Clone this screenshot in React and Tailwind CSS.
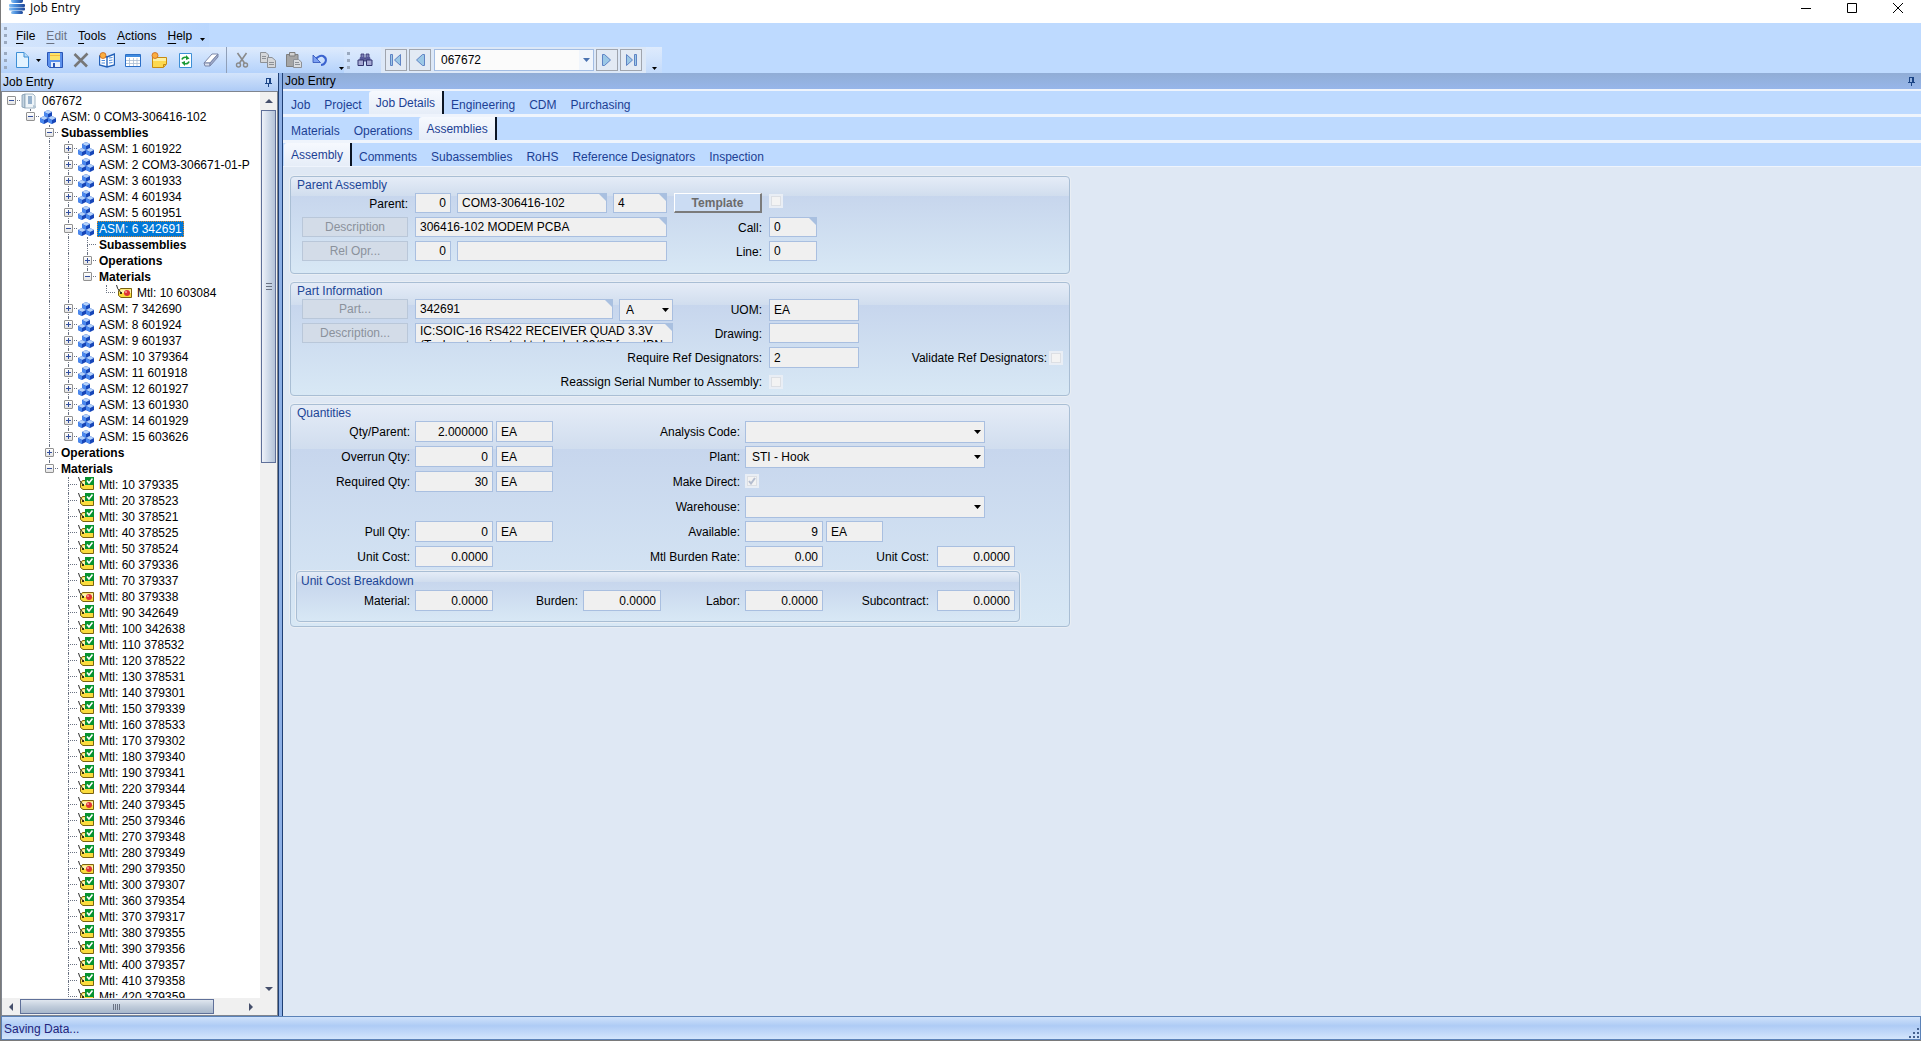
import { useState } from "react";

const subassemblies = [
  ["1", "601922"],
  ["2", "COM3-306671-01-P"],
  ["3", "601933"],
  ["4", "601934"],
  ["5", "601951"],
  ["6", "342691"],
  ["7", "342690"],
  ["8", "601924"],
  ["9", "601937"],
  ["10", "379364"],
  ["11", "601918"],
  ["12", "601927"],
  ["13", "601930"],
  ["14", "601929"],
  ["15", "603626"],
];

const materials = [
  ["10", "379335"],
  ["20", "378523"],
  ["30", "378521"],
  ["40", "378525"],
  ["50", "378524"],
  ["60", "379336"],
  ["70", "379337"],
  ["80", "379338", "tagRed"],
  ["90", "342649"],
  ["100", "342638"],
  ["110", "378532"],
  ["120", "378522"],
  ["130", "378531"],
  ["140", "379301"],
  ["150", "379339"],
  ["160", "378533"],
  ["170", "379302"],
  ["180", "379340"],
  ["190", "379341"],
  ["220", "379344"],
  ["240", "379345", "tagRed"],
  ["250", "379346"],
  ["270", "379348"],
  ["280", "379349"],
  ["290", "379350", "tagRed"],
  ["300", "379307"],
  ["360", "379354"],
  ["370", "379317"],
  ["380", "379355"],
  ["390", "379356"],
  ["400", "379357"],
  ["410", "379358"],
  ["420", "379359"],
];

const tree = {
  label: "067672",
  icon: "job",
  open: true,
  children: [
    {
      label: "ASM: 0 COM3-306416-102",
      icon: "cubes",
      open: true,
      children: [
        {
          label: "Subassemblies",
          bold: true,
          open: true,
          children: subassemblies.map(([seq, part]) => ({
            label: `ASM: ${seq} ${part}`,
            icon: "cubes",
            open: seq === "6",
            children:
              seq === "6"
                ? [
                    { label: "Subassemblies", bold: true },
                    { label: "Operations", bold: true, children: [] },
                    {
                      label: "Materials",
                      bold: true,
                      open: true,
                      children: [{ label: "Mtl: 10 603084", icon: "tagRed" }],
                    },
                  ]
                : [],
          })),
        },
        { label: "Operations", bold: true, children: [] },
        {
          label: "Materials",
          bold: true,
          open: true,
          children: materials.map(([seq, part, icon]) => ({
            label: `Mtl: ${seq} ${part}`,
            icon: icon || "tagGreen",
          })),
        },
      ],
    },
  ],
};

// Flatten the nested nodes to rows; guides say which ancestor lines run on past the row
function flatten(node, guides = [], isLast = true, rows = []) {
  rows.push({ ...node, guides, isLast });
  if (node.open) {
    const next = [...guides, !isLast];
    node.children.forEach((child, i) => flatten(child, next, i === node.children.length - 1, rows));
  }
  return rows;
}

const rows = flatten(tree);

/* ---------- icons ---------- */

function Cube({ x, y }) {
  return (
    <g transform={`translate(${x} ${y})`}>
      <path d="M4 0L8 2V6L4 8L0 6V2Z" fill="#1746b8" />
      <path d="M4 0L8 2L4 4L0 2Z" fill="#b4d2fb" />
      <path d="M0 2L4 4V8L0 6Z" fill="#4a88ee" />
    </g>
  );
}

function TreeIcon({ name }) {
  if (name === "job") {
    return (
      <svg width="16" height="16" viewBox="0 0 16 16">
        <path d="M1 2L4 1V15L1 14Z" fill="#c3d3e0" stroke="#7d98ad" strokeWidth=".8" />
        <path d="M4 1H12L14 3V15H4Z" fill="#eef4f8" stroke="#8ba3b5" strokeWidth=".8" />
        <path d="M7 4H11M7 6H11M7 8H11M7 10H11" stroke="#3f6ea0" />
        <path d="M12 12L15 13V15H12Z" fill="#b5c6d4" />
      </svg>
    );
  }
  if (name === "cubes") {
    return (
      <svg width="16" height="16" viewBox="0 0 16 16">
        <Cube x={4} y={1} />
        <Cube x={0} y={7} />
        <Cube x={8} y={7} />
      </svg>
    );
  }
  return (
    <svg width="16" height="16" viewBox="0 0 16 16">
      <path d="M4.500 3.500H15.500V12.500H5L2.500 10.500V6Z" fill="#fbdc3c" stroke="#7a6210" />
      <path d="M5 4.500H15V8H3.500V6.500Z" fill="#fdf2ae" />
      <path d="M.5 0Q1 4 4.500 7" fill="none" stroke="#2c2c2c" />
      <path d="M4 7H6V9H4Z" fill="#3b3010" />
      {name === "tagRed" ? (
        <>
          <circle cx="11" cy="8" r="3" fill="#df3236" />
          <circle cx="10" cy="7" r="1" fill="#f9a19c" />
        </>
      ) : (
        <>
          <path d="M7 0H16V8H7Z" fill="#07932f" />
          <path d="M9 3.500L11 6L14.500 1.500" fill="none" stroke="#fff" strokeWidth="1.600" />
        </>
      )}
    </svg>
  );
}

function ToolIcon({ name }) {
  const art = {
    new: (
      <>
        <path d="M2.500 .5H10L14.500 5V15.500H2.500Z" fill="#e3f3ff" stroke="#3d8fd6" />
        <path d="M10 .5V5H14.500" fill="#b9dcf7" stroke="#3d8fd6" />
      </>
    ),
    save: (
      <>
        <path d="M.5 .5H15.500V15.500H2.500L.5 13.500Z" fill="#5b90ec" stroke="#2a55b5" />
        <path d="M3 1H13V8H3Z" fill="#fbe36a" />
        <path d="M3 3.500H13" stroke="#f3b93d" />
        <path d="M4 10H13V15H4Z" fill="#e8eefb" />
        <path d="M6 11H8V15H6Z" fill="#2a55b5" />
      </>
    ),
    delete: <path d="M1.500 2L14 14.500M14.500 1.500L1.500 14.500" stroke="#777" strokeWidth="2.600" />,
    book: (
      <>
        <path d="M.5 4L8 5L15.500 2V13L8 15L.5 13Z" fill="#fff" stroke="#2361b8" strokeWidth="1.400" />
        <path d="M8 4V15" stroke="#2361b8" strokeWidth="1.400" />
        <path d="M10 6L13.500 5.500M10 8.500L13.500 8M10 11L13.500 10.500M2.500 8.500H6M2.500 11H6" stroke="#4c8bdc" />
        <circle cx="4" cy="3.500" r="3" fill="#fbae3f" stroke="#c9661a" strokeWidth=".8" />
      </>
    ),
    grid: (
      <>
        <path d="M.5 2.500H15.500V14.500H.5Z" fill="#fff" stroke="#2b6fc7" />
        <path d="M1 3H15V5H1Z" fill="#3f8be0" />
        <path d="M1 8.500H15M1 11.500H15M4.500 6V14M8.500 6V14M12 6V14" stroke="#a8bdd3" strokeWidth=".8" />
      </>
    ),
    folder: (
      <>
        <path d="M1.500 5.500H15.500V12L12.500 15.500H1.500Z" fill="#fcd94f" stroke="#c68a12" />
        <path d="M2 6H15V9H2Z" fill="#fdf0a0" />
        <path d="M12.500 15V12.500H15" fill="none" stroke="#c68a12" />
        <circle cx="4" cy="3.500" r="3" fill="#fbae3f" stroke="#c9661a" strokeWidth=".8" />
      </>
    ),
    refresh: (
      <>
        <path d="M2.500 1.500H14.500V15.500H2.500Z" fill="#fff" stroke="#3d8fd6" />
        <path d="M5 7.500Q6 4.500 10 5.500M12 9.500Q11 12.500 7 11.500" fill="none" stroke="#1c9a35" strokeWidth="1.600" />
        <path d="M9 3L12.500 6.500L9 8ZM8 9L4.500 10.500L8 14Z" fill="#1c9a35" />
      </>
    ),
    eraser: (
      <>
        <path d="M1 11L9 2H15L7 11Z" fill="#fff" stroke="#7b86a8" />
        <path d="M1 11H7V14H2Z" fill="#dde2ee" stroke="#7b86a8" />
        <path d="M7 11L15 2V5L7 14Z" fill="#9fabca" stroke="#7b86a8" />
      </>
    ),
    cut: (
      <>
        <path d="M3.500 1L10.500 11M12.500 1L5.500 11" stroke="#8a8a8a" strokeWidth="1.600" />
        <circle cx="4.500" cy="13" r="2" fill="none" stroke="#8a8a8a" strokeWidth="1.400" />
        <circle cx="11.500" cy="13" r="2" fill="none" stroke="#8a8a8a" strokeWidth="1.400" />
      </>
    ),
    copy: (
      <>
        <path d="M.5 .5H6L8.500 3V10.500H.5Z" fill="#d5d7da" stroke="#8d9197" />
        <path d="M7.500 5.500H12L15.500 8.500V15.500H7.500Z" fill="#d5d7da" stroke="#8d9197" />
        <path d="M2 4.500H6M2 6.500H6M9 10.500H14M9 12.500H14" stroke="#8d9197" />
      </>
    ),
    paste: (
      <>
        <path d="M.5 2.500H12V14.500H.5Z" fill="#a5a5a5" stroke="#7f7f7f" />
        <path d="M3.500 .5H9V4H3.500Z" fill="#d2d2d2" stroke="#7f7f7f" />
        <path d="M7.500 7.500H12.500L15.500 10V15.500H7.500Z" fill="#dadcdf" stroke="#8d9197" />
        <path d="M9 10.500H13M9 12.500H14" stroke="#8d9197" />
      </>
    ),
    undo: (
      <>
        <path d="M3 8Q7 3 11 4Q15 6 13.500 10Q12 13 9 13" fill="none" stroke="#3b63cf" strokeWidth="2" />
        <path d="M1 3V10.500H8.500Z" fill="#7da1f2" stroke="#2c4fb8" strokeWidth=".8" />
      </>
    ),
    find: (
      <>
        <path d="M4 2H7V6H4ZM9 2H12V6H9ZM7 6H9V9H7Z" fill="#7d80b8" stroke="#32346e" strokeWidth=".8" />
        <path d="M3 5H7V9H2ZM9 5H13L14 9H9Z" fill="#55589a" />
        <path d="M1 8H6.500V13.500H1ZM9.500 8H15V13.500H9.500Z" fill="#a6a9d4" stroke="#32346e" />
      </>
    ),
  };
  return (
    <svg width="16" height="16" viewBox="0 0 16 16">
      {art[name]}
    </svg>
  );
}

function NavIcon({ name }) {
  const art = {
    first: "M1.500 1.500H3.500V12.500H1.500ZM11.500 1.500V12.500L5.500 7Z",
    prev: "M11.500 1.500V12.500H9.500L3.500 7L9.500 1.500Z",
    next: "M2.500 1.500V12.500H4.500L10.500 7L4.500 1.500Z",
    last: "M12.500 1.500H10.500V12.500H12.500ZM2.500 1.500V12.500L8.500 7Z",
  };
  return (
    <svg width="14" height="14" viewBox="0 0 14 14">
      <path d={art[name]} fill="#9cc8e6" stroke="#5f83c4" />
    </svg>
  );
}

function PinIcon() {
  return (
    <svg width="7" height="9" viewBox="0 0 7 9" shapeRendering="crispEdges">
      <path d="M1 0H6V5H7V6H4V9H3V6H0V5H1ZM2 1V5H4V1Z" fill="#1c4586" fillRule="evenodd" />
    </svg>
  );
}

function Caret({ className = "text-black" }) {
  return (
    <svg width="7" height="4" viewBox="0 0 7 4" className={className}>
      <path d="M0 0H7L3.500 4Z" fill="currentColor" />
    </svg>
  );
}

function SmallCaret() {
  return (
    <svg width="5" height="3" viewBox="0 0 5 3">
      <path d="M0 0H5L2.500 3Z" />
    </svg>
  );
}

function ScrollArrow({ d }) {
  return (
    <svg width="8" height="8" viewBox="0 0 8 8">
      <path d={d} fill="#454f6b" />
    </svg>
  );
}

/* ---------- tree ---------- */

function TreeRow({ row, selected, onSelect }) {
  const hasBox = Boolean(row.children);
  const depth = row.guides.length;
  return (
    <li className="flex h-4 shrink-0">
      {row.guides.map((line, i) => (
        <span key={i} className="w-[19px] shrink-0 pl-1">
          {line && <span className="block h-4 border-l border-dotted border-gray-500" />}
        </span>
      ))}
      <span className="relative w-[14px] shrink-0">
        {depth > 0 && <span className="absolute top-0 left-1 h-2 border-l border-dotted border-gray-500" />}
        {!row.isLast && <span className="absolute top-2 left-1 h-2 border-l border-dotted border-gray-500" />}
        <span className="absolute top-[7px] left-1 w-[9px] border-t border-dotted border-gray-500" />
        {hasBox && (
          <button
            type="button"
            aria-label={row.open ? "Collapse" : "Expand"}
            className="absolute top-[3px] left-0 h-[9px] w-[9px] rounded-[1px] border border-[#919191] bg-gradient-to-b from-white to-[#e4e4e4]"
          >
            <span className="absolute top-[3px] left-px h-px w-[5px] bg-[#334f9e]" />
            {!row.open && <span className="absolute top-px left-[3px] h-[5px] w-px bg-[#334f9e]" />}
          </button>
        )}
      </span>
      {row.icon && (
        <span className="mr-[3px] w-4 shrink-0">
          <TreeIcon name={row.icon} />
        </span>
      )}
      <button
        type="button"
        onClick={onSelect}
        className={`px-[2px] leading-4 whitespace-nowrap ${row.bold ? "font-bold" : ""} ${
          selected ? "bg-[#0078d7] text-white outline-1 -outline-offset-1 outline-dotted outline-[#e08728]" : ""
        }`}
      >
        {row.label}
      </button>
    </li>
  );
}

function JobTree() {
  const [selected, setSelected] = useState(8);
  return (
    <aside className="flex w-[277px] shrink-0 flex-col">
      <div className="flex h-[18px] items-center justify-between bg-gradient-to-b from-[#d3e4fb] to-[#aecbf6] pr-[6px] pl-[2px]">
        <h2>Job Entry</h2>
        <PinIcon />
      </div>
      <div className="flex min-h-0 flex-1 flex-col border border-[#7f858f] bg-white">
        <div className="flex min-h-0 flex-1">
          <ul className="min-h-0 min-w-0 flex-1 overflow-hidden pt-px pl-[5px]">
            {rows.map((row, i) => (
              <TreeRow key={i} row={row} selected={i === selected} onSelect={() => setSelected(i)} />
            ))}
          </ul>
          <div className="flex w-[17px] flex-col items-center bg-[#f0f0f0]">
            <span className="flex h-[18px] items-center">
              <ScrollArrow d="M4 2L8 6H0Z" />
            </span>
            <span className="flex h-[39%] w-[15px] items-center justify-center border border-[#5f7099] bg-gradient-to-r from-[#eef2f9] via-[#cfdae9] to-[#b3c2d8]">
              <span className="h-[7px] w-[6px] border-y border-gray-500 py-[2px]">
                <span className="block h-px bg-gray-500" />
              </span>
            </span>
            <span className="mt-auto flex h-[18px] items-center">
              <ScrollArrow d="M4 6L0 2H8Z" />
            </span>
          </div>
        </div>
        <div className="flex h-[17px] items-center bg-[#f0f0f0] pr-[17px]">
          <span className="flex w-[18px] justify-center">
            <ScrollArrow d="M2 4L6 0V8Z" />
          </span>
          <span className="flex h-[15px] w-3/4 items-center justify-center gap-px border border-[#5f7099] bg-gradient-to-b from-[#dfe6ef] via-[#c0ccdb] to-[#a9b8cc]">
            <span className="h-[6px] w-px bg-gray-500" />
            <span className="h-[6px] w-px bg-gray-500" />
            <span className="h-[6px] w-px bg-gray-500" />
            <span className="h-[6px] w-px bg-gray-500" />
          </span>
          <span className="ml-auto flex w-[18px] justify-center">
            <ScrollArrow d="M6 4L2 0V8Z" />
          </span>
        </div>
      </div>
    </aside>
  );
}

/* ---------- form parts ---------- */

function Field({ label, value = "", right, corner, className = "h-5" }) {
  return (
    <span className={`relative block ${className}`}>
      <input
        aria-label={label}
        defaultValue={value}
        readOnly
        className={`block h-full w-full border border-[#a9bfe0] bg-[#f0f0f0] px-1 ${right ? "text-right" : ""}`}
      />
      {corner && (
        <span className="absolute top-0 right-0 h-[9px] w-[9px] bg-[#a9c0e0] [clip-path:polygon(0_0,100%_0,100%_100%)]" />
      )}
    </span>
  );
}

function Select({ label, value = "", className }) {
  return (
    <span className={`relative block h-[22px] ${className}`}>
      <select
        aria-label={label}
        className="block h-full w-full appearance-none border border-[#a9bfe0] bg-[#f0f0f0] px-[6px] text-black"
      >
        <option>{value}</option>
      </select>
      <span className="pointer-events-none absolute top-[9px] right-1">
        <Caret />
      </span>
    </span>
  );
}

function Tick({ label, checked = false }) {
  return (
    <span className="relative block h-[14px] w-[14px] shrink-0">
      <input
        type="checkbox"
        aria-label={label}
        defaultChecked={checked}
        disabled
        className="block h-full w-full appearance-none border-2 border-[#e9eef5] bg-[#f3f3f3] ring-1 ring-[#dcdfe4] ring-inset"
      />
      {checked && (
        <svg width="8" height="8" viewBox="0 0 8 8" className="absolute top-[3px] left-[3px]">
          <path d="M1 4L3 6.500L7 1" fill="none" stroke="#b4bdcf" strokeWidth="2" />
        </svg>
      )}
    </span>
  );
}

function Label({ children, className = "" }) {
  return (
    <span className={`flex h-[22px] items-center justify-end whitespace-nowrap ${className}`}>{children}</span>
  );
}

function LinkButton({ children }) {
  return (
    <button
      type="button"
      disabled
      className="h-5 w-full border border-[#b9c7d9] bg-[#d3dce8] text-[#8b929c]"
    >
      {children}
    </button>
  );
}

function Group({ title, className = "", titleClass = "h-4 pl-[6px]", children }) {
  return (
    <section
      className={`rounded-[4px] border border-[#a9bed4] bg-[linear-gradient(#e5ecf7_0%,#d0ddee_20%,#c7d6ed_20%,#d8e8f5_100%)] ring-1 ring-[#e9eef4] ${className}`}
    >
      <h3 className={`flex items-center text-[#1c4596] ${titleClass}`}>{title}</h3>
      {children}
    </section>
  );
}

function ParentAssembly() {
  return (
    <Group title="Parent Assembly" className="pb-2">
      <div className="grid auto-rows-[24px] grid-cols-[106px_252px_88px_1fr] items-start gap-x-[7px] pl-[11px]">
        <Label>Parent:</Label>
        <div className="flex gap-[6px]">
          <Field label="Parent" value="0" right className="h-5 w-9" />
          <Field label="Parent part" value="COM3-306416-102" corner className="h-5 flex-1" />
          <Field label="Revision" value="4" corner className="h-5 w-[54px]" />
        </div>
        <button
          type="button"
          disabled
          className="h-5 border-t border-r-2 border-b-2 border-l border-t-white border-r-[#7b7b7b] border-b-[#7b7b7b] border-l-white bg-[#cbdcf3] font-bold text-[#6b6b6b]"
        >
          Template
        </button>
        <div className="pt-px">
          <Tick label="Template" />
        </div>

        <LinkButton>Description</LinkButton>
        <Field label="Parent description" value="306416-102 MODEM PCBA" corner />
        <Label>Call:</Label>
        <Field label="Call" value="0" corner className="h-5 w-12" />

        <LinkButton>Rel Opr...</LinkButton>
        <div className="flex gap-[6px]">
          <Field label="Related operation" value="0" right className="h-5 w-9" />
          <Field label="Operation description" className="h-5 flex-1" />
        </div>
        <Label>Line:</Label>
        <Field label="Line" value="0" className="h-5 w-12" />
      </div>
    </Group>
  );
}

function PartInformation() {
  return (
    <Group title="Part Information">
      <div className="grid auto-rows-[24px] grid-cols-[106px_258px_82px_1fr] items-start gap-x-[7px] pl-[11px]">
        <LinkButton>Part...</LinkButton>
        <div className="flex gap-[6px]">
          <Field label="Part" value="342691" corner className="h-5 flex-1" />
          <Select label="Part revision" value="A" className="w-[54px]" />
        </div>
        <Label>UOM:</Label>
        <Field label="UOM" value="EA" className="h-[22px] w-[90px]" />

        <LinkButton>Description...</LinkButton>
        <span className="relative block h-5">
          <textarea
            aria-label="Part description"
            readOnly
            defaultValue={"IC:SOIC-16 RS422 RECEIVER QUAD 3.3V\n(Tech note migrated to loaded 09/27 from IPN"}
            className="block h-full w-full resize-none overflow-hidden border border-[#a9bfe0] bg-[#f0f0f0] px-1 leading-[14px] whitespace-pre"
          />
          <span className="absolute top-0 right-0 h-[9px] w-[9px] bg-[#a9c0e0] [clip-path:polygon(0_0,100%_0,100%_100%)]" />
        </span>
        <Label>Drawing:</Label>
        <Field label="Drawing" className="h-5 w-[90px]" />

        <Label className="col-span-3">Require Ref Designators:</Label>
        <div className="flex items-center justify-between pr-[6px]">
          <Field label="Require Ref Designators" value="2" className="h-[21px] w-[90px]" />
          <div className="flex items-center gap-[2px]">
            <span>Validate Ref Designators:</span>
            <Tick label="Validate Ref Designators" />
          </div>
        </div>

        <Label className="col-span-3">Reassign Serial Number to Assembly:</Label>
        <div className="pt-1">
          <Tick label="Reassign Serial Number to Assembly" />
        </div>
      </div>
    </Group>
  );
}

function QtyPair({ label, value, unit }) {
  return (
    <div className="flex gap-[3px]">
      <Field label={label} value={value} right className="h-[21px] w-[78px]" />
      <Field label={`${label} unit`} value={unit} className="h-[21px] w-[57px]" />
    </div>
  );
}

function Quantities() {
  return (
    <Group title="Quantities" className="pb-1">
      <div className="grid auto-rows-[25px] grid-cols-[119px_138px_182px_78px_104px_78px] items-start gap-x-[5px]">
        <Label>Qty/Parent:</Label>
        <QtyPair label="Qty/Parent" value="2.000000" unit="EA" />
        <Label>Analysis Code:</Label>
        <Select label="Analysis Code" className="col-span-3 w-60" />

        <Label>Overrun Qty:</Label>
        <QtyPair label="Overrun Qty" value="0" unit="EA" />
        <Label>Plant:</Label>
        <Select label="Plant" value="STI - Hook" className="col-span-3 w-60" />

        <Label>Required Qty:</Label>
        <QtyPair label="Required Qty" value="30" unit="EA" />
        <Label>Make Direct:</Label>
        <div className="col-span-3 pt-[3px]">
          <Tick label="Make Direct" checked />
        </div>

        <Label className="col-span-3">Warehouse:</Label>
        <Select label="Warehouse" className="col-span-3 w-60" />

        <Label>Pull Qty:</Label>
        <QtyPair label="Pull Qty" value="0" unit="EA" />
        <Label>Available:</Label>
        <div className="col-span-3">
          <QtyPair label="Available" value="9" unit="EA" />
        </div>

        <Label>Unit Cost:</Label>
        <Field label="Unit Cost" value="0.0000" right className="h-[21px] w-[78px]" />
        <Label>Mtl Burden Rate:</Label>
        <Field label="Mtl Burden Rate" value="0.00" right className="h-[21px]" />
        <Label className="pr-[3px]">Unit Cost:</Label>
        <Field label="Burdened unit cost" value="0.0000" right className="h-[21px]" />
      </div>

      <Group title="Unit Cost Breakdown" titleClass="h-[18px] pl-1" className="mr-[49px] ml-[5px] pb-[9px]">
        <div className="grid grid-cols-[113px_78px_80px_78px_74px_78px_104px_78px] items-start gap-x-[5px]">
          <Label>Material:</Label>
          <Field label="Material" value="0.0000" right className="h-[21px]" />
          <Label>Burden:</Label>
          <Field label="Burden" value="0.0000" right className="h-[21px]" />
          <Label>Labor:</Label>
          <Field label="Labor" value="0.0000" right className="h-[21px]" />
          <Label className="pr-[3px]">Subcontract:</Label>
          <Field label="Subcontract" value="0.0000" right className="h-[21px]" />
        </div>
      </Group>
    </Group>
  );
}

function TabStrip({ tabs, initial }) {
  const [active, setActive] = useState(initial);
  return (
    <div role="tablist" className="flex h-[26px] border-t-2 border-b border-[#eff4fc] bg-[#bedaff] pl-px">
      {tabs.map((tab) => (
        <button
          key={tab}
          type="button"
          role="tab"
          aria-selected={tab === active}
          onClick={() => setActive(tab)}
          className={
            tab === active
              ? "rounded-tl-[3px] border-r-2 border-[#0b1524] bg-gradient-to-b from-[#f6f9fe] to-[#e6edf8] px-[7px] text-[#1c3f94]"
              : "px-[7px] pt-1 text-[#1c3f94]"
          }
        >
          {tab}
        </button>
      ))}
    </div>
  );
}

/* ---------- window chrome ---------- */

function TitleBar() {
  return (
    <header className="flex h-[23px] items-start justify-between bg-white">
      <div className="flex items-start gap-[5px] pl-2">
        <svg width="16" height="14" viewBox="0 0 16 14">
          <defs>
            <linearGradient id="band">
              <stop offset="0" stopColor="#8ec2f2" />
              <stop offset=".35" stopColor="#4f93e0" />
              <stop offset="1" stopColor="#1d4596" />
            </linearGradient>
          </defs>
          <rect x="2" y="-2" width="12" height="5" rx="2" fill="url(#band)" />
          <rect x="0" y="4" width="16" height="3" rx="1" fill="url(#band)" />
          <rect x="0" y="7.500" width="16" height="3" rx="1" fill="url(#band)" />
          <rect x="2" y="11" width="12" height="3" rx="1.500" fill="url(#band)" />
        </svg>
        <h1 className="font-['Open_Sans',sans-serif] text-[12px] leading-4">Job Entry</h1>
      </div>
      <div className="flex">
        <button type="button" aria-label="Minimize" className="flex h-[15px] w-[46px] items-center justify-center">
          <svg width="10" height="10" viewBox="0 0 10 10">
            <path d="M0 5.500H10" stroke="#000" />
          </svg>
        </button>
        <button type="button" aria-label="Maximize" className="flex h-[15px] w-[46px] items-center justify-center">
          <svg width="10" height="10" viewBox="0 0 10 10">
            <path d="M.5 .5H9.500V9.500H.5Z" fill="none" stroke="#000" />
          </svg>
        </button>
        <button type="button" aria-label="Close" className="flex h-[15px] w-[46px] items-center justify-center">
          <svg width="10" height="10" viewBox="0 0 10 10">
            <path d="M0 0L10 10M10 0L0 10" stroke="#000" />
          </svg>
        </button>
      </div>
    </header>
  );
}

function Grip() {
  return <span className="mr-[2px] ml-[3px] h-[17px] border-l-[3px] border-dotted border-[#9aa9bf]" />;
}

function MenuBar() {
  return (
    <nav className="flex h-6 items-center">
      <div className="flex h-full w-52 items-center bg-gradient-to-r from-[#d6e6fc] to-[#bad7fe]">
        <Grip />
        <div className="flex gap-px pt-[2px] pl-[2px]">
          {["File", "Edit", "Tools", "Actions", "Help"].map((item) => (
            <button key={item} type="button" className={`px-[5px] ${item === "Edit" ? "text-gray-500" : ""}`}>
              <span className="underline underline-offset-[3px]">{item[0]}</span>
              {item.slice(1)}
            </button>
          ))}
        </div>
        <span className="mt-2 ml-[3px]">
          <SmallCaret />
        </span>
      </div>
    </nav>
  );
}

function Overflow() {
  return (
    <span className="mt-4 ml-[6px]">
      <SmallCaret />
    </span>
  );
}

function ToolButton({ name }) {
  return (
    <button type="button" aria-label={name} className="flex h-6 w-[26px] items-center justify-center">
      <ToolIcon name={name} />
    </button>
  );
}

function NavButton({ name }) {
  return (
    <button
      type="button"
      aria-label={name}
      className="flex h-[22px] w-[22px] items-center justify-center border border-[#a0a5ae] bg-[#e3eaf4]"
    >
      <NavIcon name={name} />
    </button>
  );
}

function Toolbar() {
  return (
    <div className="flex h-[26px]">
      <div className="flex w-[343px] items-center bg-gradient-to-b from-[#deebfd] to-[#b4d2fb]">
        <Grip />
        <ToolButton name="new" />
        <span className="flex w-[7px] justify-center">
          <SmallCaret />
        </span>
        {["save", "delete", "book", "grid", "folder", "refresh", "eraser"].map((name) => (
          <ToolButton key={name} name={name} />
        ))}
        <span className="mx-[2px] h-full w-px bg-[#8f9fb8]" />
        {["cut", "copy", "paste", "undo"].map((name) => (
          <ToolButton key={name} name={name} />
        ))}
        <Overflow />
      </div>
      <div className="flex items-center bg-gradient-to-b from-[#deebfd] to-[#c4dbfb] pr-[5px]">
        <Grip />
        <ToolButton name="find" />
        <div className="ml-[3px] flex h-full items-center gap-[2px] bg-[#dde8f7] px-1">
          <NavButton name="first" />
          <NavButton name="prev" />
          <span className="relative ml-px block h-[22px] w-40">
            <select
              aria-label="Job number"
              className="block h-full w-full appearance-none border border-[#a3bde3] bg-[#fbfbfb] px-[6px]"
            >
              <option>067672</option>
            </select>
            <span className="pointer-events-none absolute top-px right-px flex h-5 w-[14px] items-center justify-center bg-[#f0f5fc]">
              <Caret className="text-[#4a72b0]" />
            </span>
          </span>
          <NavButton name="next" />
          <NavButton name="last" />
        </div>
        <Overflow />
      </div>
    </div>
  );
}

function StatusBar() {
  return (
    <footer className="flex h-6 items-center justify-between border border-[#5b82b8] bg-[linear-gradient(#cfe1fa_0%,#aecbf5_40%,#d3e5fc_100%)] pt-[2px] pr-px pl-[2px]">
      <span className="text-[#22247c]">Saving Data...</span>
      <svg width="10" height="10" viewBox="0 0 10 10" className="mt-2" shapeRendering="crispEdges">
        <path d="M8 0H10V2H8ZM4 4H6V6H4ZM8 4H10V6H8ZM0 8H2V10H0ZM4 8H6V10H4ZM8 8H10V10H8Z" fill="#44618f" />
      </svg>
    </footer>
  );
}

export default function App() {
  return (
    <div className="flex h-screen flex-col border-b border-l border-[#7a7a7a] bg-[#bedaff] font-['Liberation_Sans',Arial,sans-serif] text-[12px] leading-4 text-black">
      <TitleBar />
      <MenuBar />
      <Toolbar />
      <div className="flex min-h-0 flex-1">
        <JobTree />
        <div className="w-[5px] shrink-0 border-x border-[#1f3f74] bg-[#8db0e6]" />
        <main className="flex min-w-0 flex-1 flex-col bg-[#dfe8f4]">
          <div className="flex h-4 items-center justify-between bg-gradient-to-b from-[#91add6] to-[#97b6ea] pr-[6px] pl-[2px]">
            <h2>Job Entry</h2>
            <PinIcon />
          </div>
          <TabStrip
            tabs={["Job", "Project", "Job Details", "Engineering", "CDM", "Purchasing"]}
            initial="Job Details"
          />
          <TabStrip tabs={["Materials", "Operations", "Assemblies"]} initial="Assemblies" />
          <TabStrip
            tabs={["Assembly", "Comments", "Subassemblies", "RoHS", "Reference Designators", "Inspection"]}
            initial="Assembly"
          />
          <div className="flex w-[787px] flex-col gap-2 pt-[9px] pl-[7px]">
            <ParentAssembly />
            <PartInformation />
            <Quantities />
          </div>
        </main>
      </div>
      <StatusBar />
    </div>
  );
}
